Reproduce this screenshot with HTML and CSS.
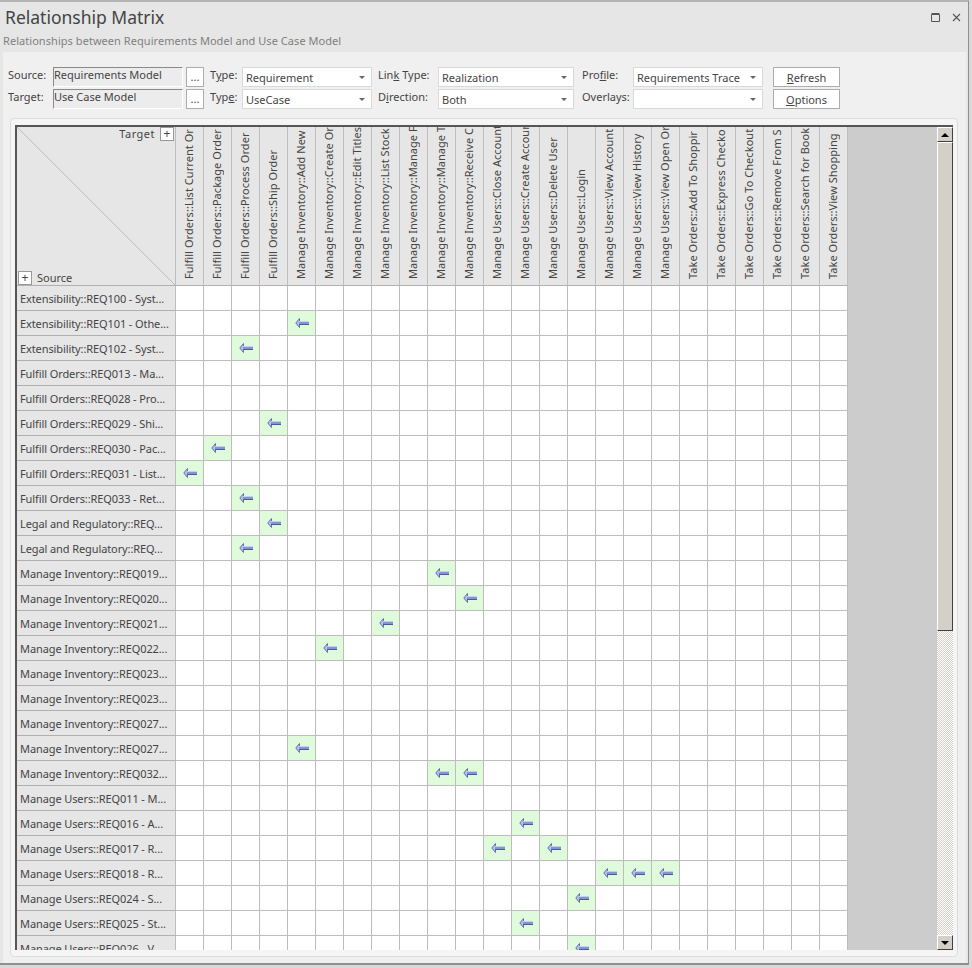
FILE: index.html
```html
<!DOCTYPE html>
<html lang="en">
<head>
  <meta charset="UTF-8">
  <meta name="viewport" content="width=device-width, initial-scale=1.0">
  <title>Relationship Matrix</title>
  <link rel="stylesheet" href="styles.css">
</head>
<body>
  <div class="window">
    <div class="titlebar">
      <div class="titles">
        <h1>Relationship Matrix</h1>
        <p>Relationships between Requirements Model and Use Case Model</p>
      </div>
      <div class="controls">
        <svg width="9" height="9" viewBox="0 0 9 9"><path d="M.5 1.5h8v7h-8z M.5 .5h8" fill="none" stroke="#555"/></svg>
        <svg width="9" height="9" viewBox="0 0 9 9"><path d="M1 1l7 7M8 1l-7 7" fill="none" stroke="#555" stroke-width="1.1"/></svg>
      </div>
    </div>

    <div class="content">
      <form class="filters">
        <label>Source:</label>
        <div class="readonly">Requirements Model</div>
        <button type="button" class="dots">...</button>
        <label class="lbl-mid">T<u>y</u>pe:</label>
        <div class="combo">Requirement</div>
        <label class="lbl-mid">Lin<u>k</u> Type:</label>
        <div class="combo">Realization</div>
        <label class="lbl-wide">Pro<u>f</u>ile:</label>
        <div class="combo">Requirements Trace</div>
        <button type="button" class="action"><u>R</u>efresh</button>

        <label>Target:</label>
        <div class="readonly">Use Case Model</div>
        <button type="button" class="dots">...</button>
        <label class="lbl-mid">Typ<u>e</u>:</label>
        <div class="combo">UseCase</div>
        <label class="lbl-mid">D<u>i</u>rection:</label>
        <div class="combo">Both</div>
        <label class="lbl-wide">Overlays:</label>
        <div class="combo"></div>
        <button type="button" class="action"><u>O</u>ptions</button>
      </form>

      <div class="panel">
        <div class="matrix">
          <div class="grid" id="grid">
            <div class="corner">
              <svg class="diagonal" width="158" height="158" viewBox="0 0 158 158"><line x1="0" y1="0" x2="158" y2="158" stroke="#bdbdbd"/></svg>
              <div class="corner-row right"><span class="target-name">Target</span> <span class="plus">+</span></div>
              <div class="corner-row"><span class="plus">+</span> Source</div>
            </div>
          </div>
          <div class="scrollbar">
            <div class="sb-btn"><span class="tri-up"></span></div>
            <div class="sb-thumb"></div>
            <div class="sb-track"></div>
            <div class="sb-btn"><span class="tri-down"></span></div>
          </div>
        </div>
      </div>
    </div>
  </div>
  <script src="matrix.js"></script>
</body>
</html>
```

FILE: styles.css
```css
/* Base */
body {
  margin: 0;
  width: 972px;
  height: 968px;
  overflow: hidden;
  background-color: #d9d9d9;
  font-family: "Noto Sans", sans-serif;
  font-size: 11px;
  color: #444;
}
.window {
  width: 969px;
  height: 965px;
  box-sizing: border-box;
  border-top: 2px solid #b4b4b4;
  border-right: 1px solid #8f8f8f;
  border-bottom: 2px solid #8f8f8f;
  background-color: #e6e6e6;
  display: flex;
  flex-direction: column;
}

/* Title bar */
.titlebar {
  height: 50px;
  flex: none;
  display: flex;
  justify-content: space-between;
}
.titles {
  padding-left: 3px;
}
h1 {
  margin: 3px 0 0 2px;
  font-size: 17.5px;
  line-height: 24px;
  font-weight: 400;
  color: #444;
}
.titles p {
  margin: 4px 0 0;
  line-height: 15px;
  letter-spacing: .05px;
  color: #808080;
}
.controls {
  display: flex;
  gap: 12px;
  padding: 11px 7px 0 0;
  align-items: flex-start;
}

/* Body of the window */
.content {
  flex: 1;
  min-height: 0;
  margin-left: 3px;
  margin-right: 2px;
  background-color: #f0f0f0;
  display: flex;
  flex-direction: column;
}
.filters {
  display: grid;
  grid-template-columns: 45px 130px 21px 38px 130px 66px 136px 59px 130px 77px;
  grid-template-rows: 20px 20px;
  row-gap: 2px;
  padding: 15px 0 0 5px;
  flex: none;
}
.filters label {
  line-height: 16px;
  color: #444;
  white-space: nowrap;
}
.filters .lbl-mid {
  padding-left: 6px;
}
.filters .lbl-wide {
  padding-left: 8px;
}
.readonly {
  box-sizing: border-box;
  border: 1px solid #fff;
  border-top-color: #8a8a8a;
  border-left-color: #8a8a8a;
  background-color: #ececec;
  line-height: 14px;
}
.dots {
  box-sizing: border-box;
  width: 18px;
  height: 20px;
  margin-left: 3px;
  padding: 0;
  border: 1px solid #adadad;
  background-color: #fff;
  color: #444;
  font: 11px "Noto Sans", sans-serif;
  line-height: 18px;
}
.combo {
  position: relative;
  box-sizing: border-box;
  border: 1px solid #d9d9d9;
  background-color: #fff;
  line-height: 20px;
  padding-left: 3px;
}
.combo::after {
  content: "";
  position: absolute;
  right: 6px;
  top: 8px;
  border: 3px solid transparent;
  border-top: 3px solid #666;
}
.action {
  box-sizing: border-box;
  width: 67px;
  margin-left: 10px;
  padding: 0;
  border: 1px solid #adadad;
  background-color: #fff;
  color: #444;
  font: 11px "Noto Sans", sans-serif;
}

/* Matrix */
.panel {
  flex: 1;
  min-height: 0;
  margin: 9px 8px 6px 7px;
  padding: 6px 4px;
  border: 1px solid #dcdcdc;
  border-radius: 4px;
  background-color: #f5f5f5;
  display: flex;
}
.matrix {
  flex: 1;
  min-width: 0;
  display: flex;
  border-top: 2px solid #555;
  border-left: 2px solid #555;
  background-color: #ccc;
}
.grid {
  flex: 1;
  min-width: 0;
  overflow: hidden;
  display: grid;
  grid-template-columns: 159px repeat(24, 28px);
  grid-template-rows: 159px;
  grid-auto-rows: 25px;
  align-content: start;
}
.corner {
  position: relative;
  box-sizing: border-box;
  background-color: #e6e6e6;
  border-right: 1px solid #bdbdbd;
  border-bottom: 1px solid #b0b0b0;
  display: flex;
  flex-direction: column;
  justify-content: space-between;
  padding: 0 1px 0 1px;
}
.diagonal {
  position: absolute;
  left: 0;
  top: 0;
}
.corner-row {
  position: relative;
  display: flex;
  align-items: center;
  gap: 5px;
  line-height: 14px;
}
.corner-row.right {
  justify-content: flex-end;
}
.target-name {
  letter-spacing: .5px;
}
.plus {
  box-sizing: border-box;
  width: 14px;
  height: 14px;
  border: 1px solid #999;
  background-color: #fff;
  text-align: center;
  line-height: 12px;
  font-size: 12px;
}
.col-head {
  box-sizing: border-box;
  background-color: #e6e6e6;
  border-right: 1px solid #bdbdbd;
  border-bottom: 1px solid #b0b0b0;
  overflow: hidden;
  display: flex;
  flex-direction: column;
  align-items: center;
  justify-content: flex-end;
  padding-right: 2px;
}
.col-head span {
  writing-mode: vertical-rl;
  transform: rotate(180deg);
  white-space: nowrap;
  line-height: 25px;
  height: 152px;
  padding-top: 6px;
  letter-spacing: .05px;
  text-align: left;
}
.row-head {
  box-sizing: border-box;
  background-color: #e6e6e6;
  border-right: 1px solid #bdbdbd;
  border-bottom: 1px solid #b0b0b0;
  padding-left: 3px;
  line-height: 26px;
  letter-spacing: -.1px;
  white-space: nowrap;
  overflow: hidden;
}
.cell {
  box-sizing: border-box;
  background-color: #fff;
  border-right: 1px solid #bdbdbd;
  border-bottom: 1px solid #bdbdbd;
  display: flex;
  align-items: center;
  justify-content: center;
}
.cell.linked {
  background-color: #e0fbdc;
}

/* Scrollbar */
.scrollbar {
  flex: none;
  width: 16px;
  display: flex;
  flex-direction: column;
}
.sb-btn, .sb-thumb {
  box-sizing: border-box;
  background-color: #d4d0c8;
  border: 1px solid #404040;
  border-top-color: #fff;
  border-left-color: #fff;
}
.sb-btn {
  flex: none;
  height: 15px;
  display: flex;
  align-items: center;
  justify-content: center;
}
.sb-thumb {
  flex: none;
  height: 489px;
}
.sb-track {
  flex: 1;
  background-color: #fff;
  background-image: conic-gradient(#d4d0c8 25%, #fff 0 50%, #d4d0c8 0 75%, #fff 0);
  background-size: 2px 2px;
}
.tri-up, .tri-down {
  width: 0;
  height: 0;
  border-left: 4px solid transparent;
  border-right: 4px solid transparent;
}
.tri-up { border-bottom: 4px solid #000; }
.tri-down { border-top: 4px solid #000; }
```

FILE: matrix.js
```js
// Target elements, one per column
var targets = [
  'Fulfill Orders::List Current Or', 'Fulfill Orders::Package Order', 'Fulfill Orders::Process Order',
  'Fulfill Orders::Ship Order', 'Manage Inventory::Add New', 'Manage Inventory::Create Or',
  'Manage Inventory::Edit Titles', 'Manage Inventory::List Stock', 'Manage Inventory::Manage F',
  'Manage Inventory::Manage T', 'Manage Inventory::Receive C', 'Manage Users::Close Account',
  'Manage Users::Create Accour', 'Manage Users::Delete User', 'Manage Users::Login',
  'Manage Users::View Account', 'Manage Users::View History', 'Manage Users::View Open Or',
  'Take Orders::Add To Shoppir', 'Take Orders::Express Checko', 'Take Orders::Go To Checkout',
  'Take Orders::Remove From S', 'Take Orders::Search for Book', 'Take Orders::View Shopping'
];

// Source elements, with the columns that hold a link
var sources = [
  ['Extensibility::REQ100 - Syst...', []],
  ['Extensibility::REQ101 - Othe...', [4]],
  ['Extensibility::REQ102 - Syst...', [2]],
  ['Fulfill Orders::REQ013 - Ma...', []],
  ['Fulfill Orders::REQ028 - Pro...', []],
  ['Fulfill Orders::REQ029 - Shi...', [3]],
  ['Fulfill Orders::REQ030 - Pac...', [1]],
  ['Fulfill Orders::REQ031 - List...', [0]],
  ['Fulfill Orders::REQ033 - Ret...', [2]],
  ['Legal and Regulatory::REQ...', [3]],
  ['Legal and Regulatory::REQ...', [2]],
  ['Manage Inventory::REQ019...', [9]],
  ['Manage Inventory::REQ020...', [10]],
  ['Manage Inventory::REQ021...', [7]],
  ['Manage Inventory::REQ022...', [5]],
  ['Manage Inventory::REQ023...', []],
  ['Manage Inventory::REQ023...', []],
  ['Manage Inventory::REQ027...', []],
  ['Manage Inventory::REQ027...', [4]],
  ['Manage Inventory::REQ032...', [9, 10]],
  ['Manage Users::REQ011 - M...', []],
  ['Manage Users::REQ016 - A...', [12]],
  ['Manage Users::REQ017 - R...', [11, 13]],
  ['Manage Users::REQ018 - R...', [15, 16, 17]],
  ['Manage Users::REQ024 - S...', [14]],
  ['Manage Users::REQ025 - St...', [12]],
  ['Manage Users::REQ026 - V...', [14]]
];

var arrow = '<svg width="14" height="10" viewBox="0 0 14 10">' +
  '<path d="M4.5 .5L.8 5l3.7 4.5z" fill="#b4c2ea" stroke="#6272b4"/>' +
  '<rect x="4" y="3" width="10" height="1" fill="#c4d0f0"/>' +
  '<rect x="4" y="4" width="10" height="2" fill="#8496d0"/>' +
  '<rect x="4" y="6" width="10" height="1" fill="#4a5aa0"/>' +
  '</svg>';

var html = '';
targets.forEach(function(name) {
  html += '<div class="col-head"><span>' + name + '</span></div>';
});
sources.forEach(function(row) {
  html += '<div class="row-head">' + row[0] + '</div>';
  targets.forEach(function(name, i) {
    if (row[1].indexOf(i) >= 0) {
      html += '<div class="cell linked">' + arrow + '</div>';
    } else {
      html += '<div class="cell"></div>';
    }
  });
});
document.getElementById('grid').insertAdjacentHTML('beforeend', html);
```
